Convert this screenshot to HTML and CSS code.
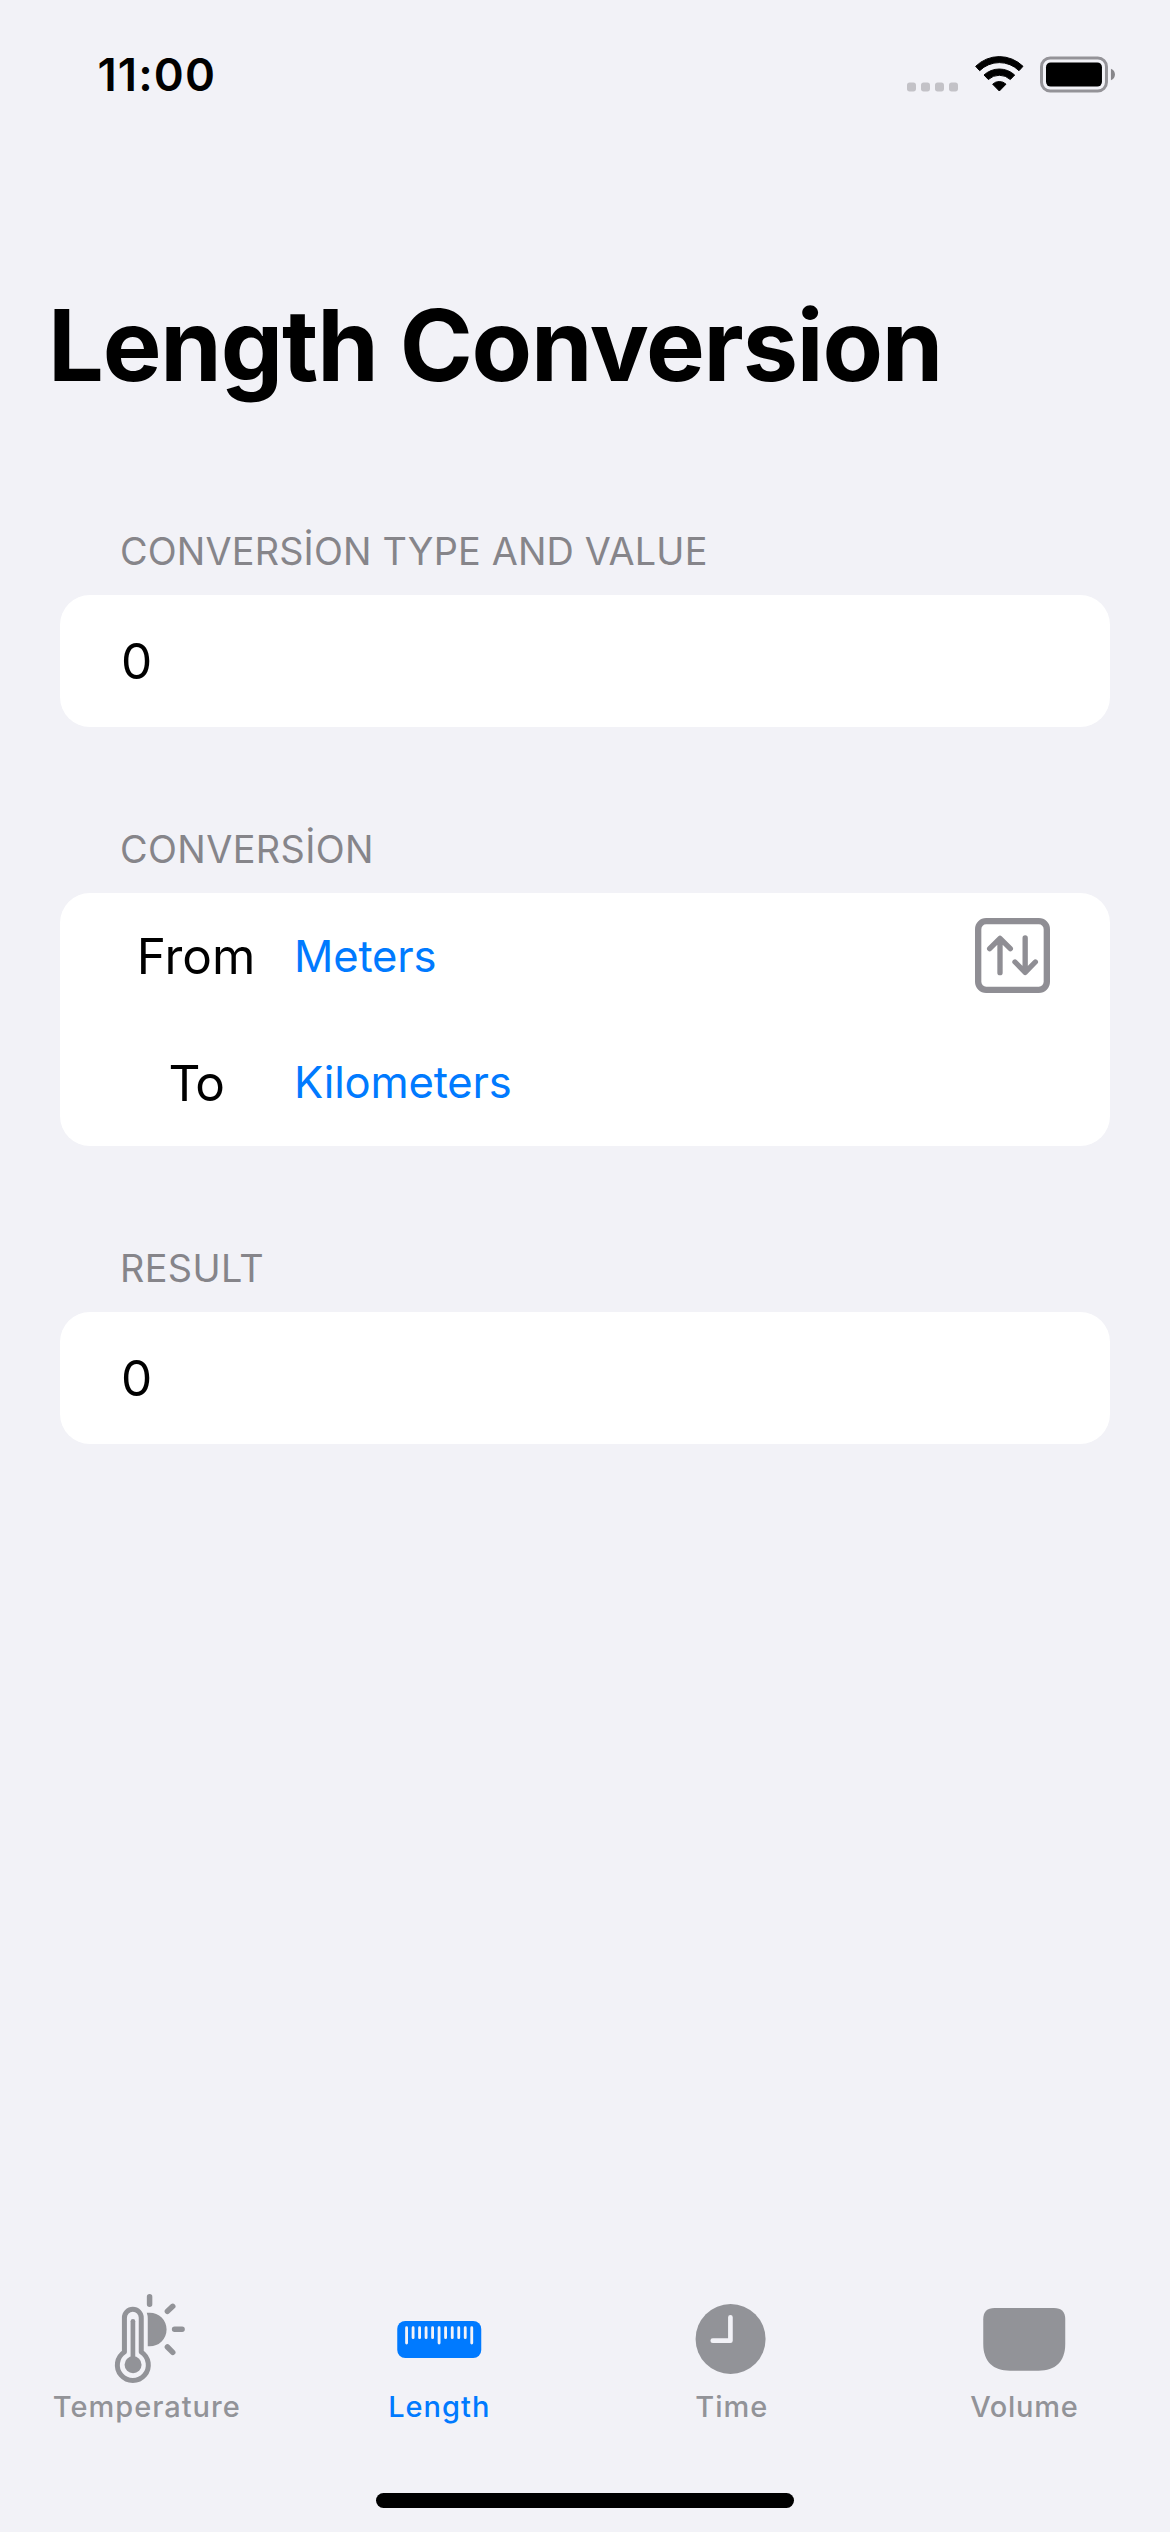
FILE: index.html
```html
<!DOCTYPE html>
<html lang="en">
<head>
<meta charset="utf-8">
<title>Length Conversion</title>
<link rel="stylesheet" href="styles.css">
</head>
<body>
<div class="screen">
  <header class="status-bar">
    <span class="clock">11:00</span>
    <div class="status-icons">
      <svg class="signal" viewBox="51 61.5 153 144" fill="#c3c2c7">
        <rect x="51" y="156" width="27" height="27" rx="8"/>
        <rect x="93" y="156" width="27" height="27" rx="8"/>
        <rect x="135" y="156" width="27" height="27" rx="8"/>
        <rect x="177" y="156" width="27" height="27" rx="8"/>
      </svg>
      <svg class="wifi" viewBox="254 61.5 147 144" stroke="#000" stroke-width="3" stroke-linejoin="round">
        <path d="M256 107.500A101 101 0 0 1 398 107.500L386 120.500A84 84 0 0 0 268 120.500Z"/>
        <path d="M281 133.500A68 68 0 0 1 373 133.500L360 147A49 49 0 0 0 294 147Z"/>
        <path d="M307 161A29 29 0 0 1 347 161L327 181.500Z"/>
      </svg>
      <svg class="battery" viewBox="450 61.5 226 144">
        <rect x="454.500" y="82.500" width="195" height="99" rx="26" fill="none" stroke="#949398" stroke-width="9"/>
        <rect x="468" y="96" width="168" height="72" rx="14"/>
        <path d="M663 115C679 120 679 144 663 149Z" fill="#88878b"/>
      </svg>
    </div>
  </header>

  <main class="content">
    <h1 class="title">Length Conversion</h1>

    <section class="group">
      <h2 class="group-label">CONVERSİON TYPE AND VALUE</h2>
      <div class="card value">0</div>
    </section>

    <section class="group">
      <h2 class="group-label spaced">CONVERSİON</h2>
      <div class="card">
        <div class="row">
          <span class="row-name">From</span>
          <span class="unit">Meters</span>
          <svg class="swap" viewBox="75 114 225 225" fill="none" stroke="#8f8e94" stroke-linecap="round" stroke-linejoin="round">
            <rect x="84.500" y="123.500" width="206" height="206" rx="24" stroke-width="19"/>
            <path d="M150 278V176M119 206L150 175L181 206M225.500 174V277M195 246L225.500 277L256 246" stroke-width="16"/>
          </svg>
        </div>
        <div class="row">
          <span class="row-name to">To</span>
          <span class="unit">Kilometers</span>
        </div>
      </div>
    </section>

    <section class="group">
      <h2 class="group-label spaced">RESULT</h2>
      <div class="card value">0</div>
    </section>
  </main>

  <nav class="tabs">
    <div class="tab">
      <svg class="tab-icon" viewBox="138.75 60 360 291" fill="none" stroke="#929398" stroke-linecap="round">
        <path d="M254 246V143A25.250 25.250 0 0 1 304.500 143V246A46.500 46.500 0 1 1 254 246Z" stroke-width="15" stroke-linejoin="round"/>
        <path d="M279.500 154V284" stroke-width="14"/>
        <circle cx="280" cy="284" r="25.500" fill="#929398" stroke="none"/>
        <path d="M321 128H330A50.500 50.500 0 0 1 330 229H324V145Q324 136 321 128Z" fill="#929398" stroke="none"/>
        <path d="M329.500 80V103M399 109L383 124M404.500 178H427M383 231L399 247" stroke-width="16.500"/>
      </svg>
      <span class="tab-label">Temperature</span>
    </div>
    <div class="tab active">
      <svg class="tab-icon" viewBox="26.25 60 360 291">
        <rect x="81" y="153" width="252" height="111" rx="24" fill="#007aff"/>
        <path d="M109 173V219M206.500 173V219M304.500 173V219M128.500 173V203M148 173V203M167.500 173V203M187 173V203M226 173V203M246 173V203M265.500 173V203M285 173V203" stroke="#f2f2f7" stroke-width="8.500" stroke-linecap="round"/>
      </svg>
      <span class="tab-label">Length</span>
    </div>
    <div class="tab">
      <svg class="tab-icon" viewBox="33.75 60 360 291">
        <circle cx="212.500" cy="207" r="105" fill="#929398"/>
        <path d="M212 142V212H159" fill="none" stroke="#f2f2f7" stroke-width="14" stroke-linecap="round" stroke-linejoin="round"/>
      </svg>
      <span class="tab-label">Time</span>
    </div>
    <div class="tab">
      <svg class="tab-icon" viewBox="71.25 60 360 291">
        <path d="M129 148Q129 114 163 114H341Q375 114 375 148V222C375 275 345 302 295 302H209C159 302 129 275 129 222Z" fill="#929398"/>
      </svg>
      <span class="tab-label volume">Volume</span>
    </div>
  </nav>
  <div class="home-bar"></div>
</div>
</body>
</html>
```
FILE: styles.css
```css
* { box-sizing: border-box; }

body {
  margin: 0;
  background: #f2f2f7;
  color: #000;
  font-family: Inter, "Liberation Sans", sans-serif;
}

svg { display: block; }

.screen {
  display: flex;
  flex-direction: column;
  width: 1170px;
  height: 2532px;
  padding-bottom: 24px;
  overflow: hidden;
}

.status-bar {
  display: flex;
  align-items: center;
  justify-content: space-between;
  height: 149px;
  padding: 0 54.700px 0 97.500px;
}

.clock {
  font-size: 45.500px;
  font-weight: 600;
  letter-spacing: 1.100px;
}

.status-icons {
  display: flex;
  gap: 16.500px;
}

.status-icons svg { height: 48px; }
.signal { width: 51px; }
.wifi { width: 49px; }
.battery { width: 75.300px; }

.content {
  flex: 1;
  padding: 136px 60px 0;
}

.title {
  margin: 0 0 126px -12px;
  font-size: 98.800px;
  font-weight: 700;
  line-height: 120px;
  letter-spacing: -1.180px;
}

.group { margin-bottom: 102px; }

.group-label {
  margin: 0 0 24px;
  padding-left: 60px;
  color: #86858a;
  font-size: 37.800px;
  font-weight: 400;
  line-height: 40px;
  letter-spacing: 0.180px;
}

.group-label.spaced { letter-spacing: 0.400px; }

.card {
  border-radius: 30px;
  background: #fff;
}

.value {
  height: 132px;
  padding: 0 60px 0 61px;
  font-size: 49.500px;
  line-height: 132px;
}

.row {
  display: flex;
  align-items: center;
  height: 126.500px;
  padding: 0 60px 0 61px;
}

.row-name {
  width: 150px;
  font-size: 49.500px;
  text-align: center;
}

.row-name.to { letter-spacing: -1.500px; }

.unit {
  margin-left: 23px;
  color: #007aff;
  font-size: 43.600px;
  letter-spacing: -0.200px;
}

.swap {
  width: 75px;
  height: 75px;
  margin: 0 0 1.500px auto;
}

.tabs {
  display: grid;
  grid-template-columns: repeat(4, 1fr);
  margin-bottom: 66px;
}

.tab {
  display: flex;
  flex-direction: column;
  align-items: center;
  color: #929398;
}

.tab.active { color: #007aff; }

.tab-icon {
  width: 120px;
  height: 97px;
}

.tab-label {
  padding-left: 1px;
  font-size: 29px;
  font-weight: 500;
  line-height: 40px;
  letter-spacing: 1px;
}

.tab-label.volume { letter-spacing: 0.700px; }

.home-bar {
  align-self: center;
  width: 418px;
  height: 15px;
  border-radius: 8px;
  background: #000;
}
```
